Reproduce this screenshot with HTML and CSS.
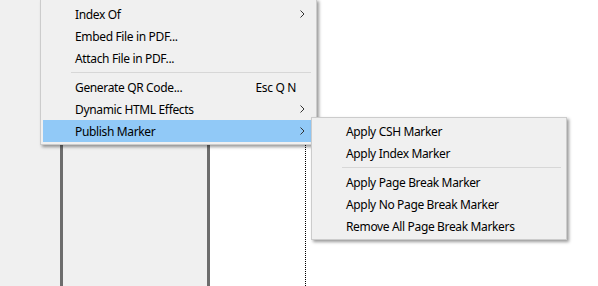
FILE: index.html
```html
<!DOCTYPE html>
<html lang="en">
<head>
    <meta charset="UTF-8">
    <title>Publish Marker menu</title>
    <link rel="stylesheet" href="styles.css">
</head>
<body>
    <div class="workspace">
        <div class="gutter"></div>
        <div class="panel"></div>
        <div class="document">
            <div class="page-edge"></div>
        </div>
    </div>

    <!-- context menu and its open submenu lie over the workspace -->
    <ul class="menu main-menu">
        <li class="item">Index Of<span class="key"></span><span class="arrow"><svg width="5" height="8" viewBox="0 0 5 8"><polyline points="0.5,0.5 4,4 0.5,7.5" /></svg></span></li>
        <li class="item">Embed File in PDF...<span class="key"></span><span class="arrow"></span></li>
        <li class="item">Attach File in PDF...<span class="key"></span><span class="arrow"></span></li>
        <li class="separator"></li>
        <li class="item">Generate QR Code...<span class="key">Esc Q N</span><span class="arrow"></span></li>
        <li class="item">Dynamic HTML Effects<span class="key"></span><span class="arrow"><svg width="5" height="8" viewBox="0 0 5 8"><polyline points="0.5,0.5 4,4 0.5,7.5" /></svg></span></li>
        <li class="item active">Publish Marker<span class="key"></span><span class="arrow"><svg width="5" height="8" viewBox="0 0 5 8"><polyline points="0.5,0.5 4,4 0.5,7.5" /></svg></span></li>
    </ul>

    <ul class="menu sub-menu">
        <li class="item">Apply CSH Marker</li>
        <li class="item">Apply Index Marker</li>
        <li class="separator"></li>
        <li class="item">Apply Page Break Marker</li>
        <li class="item">Apply No Page Break Marker</li>
        <li class="item">Remove All Page Break Markers</li>
    </ul>
</body>
</html>
```

FILE: styles.css
```css
:root {
    --face: #f0f0f0;
    --menu-border: #cccccc;
    --hover: #91c9f7;
    --frame: #6d6d6d;
}

body {
    margin: 0;
    width: 598px;
    height: 286px;
    overflow: hidden;
    position: relative;
    font-family: 'Noto Sans', 'Open Sans', sans-serif;
    font-size: 12px;
    letter-spacing: -0.35px;
    color: #000;
}

.workspace {
    display: flex;
    height: 286px;
}

.gutter {
    width: 60px;
    background-color: var(--face);
}

.panel {
    width: 144px;
    background-color: var(--face);
    border-left: 3px solid var(--frame);
    border-right: 3px solid var(--frame);
}

.document {
    flex: 1;
    background-color: #fff;
    padding-left: 95px;
}

.page-edge {
    height: 100%;
    border-left: 1px dotted #000;
}

.menu {
    position: absolute;
    margin: 0;
    padding: 2px;
    list-style: none;
    background-color: var(--face);
    border: 1px solid var(--menu-border);
    box-shadow: 2px 2px 3px rgba(0,0,0,0.4);
}

.main-menu {
    left: 40px;
    top: -1px;
    width: 271px;
    padding-top: 3px;
}

.sub-menu {
    left: 311px;
    top: 117px;
    width: 250px;
}

.item {
    display: flex;
    align-items: center;
    height: 22px;
    padding-left: 32px;
    white-space: nowrap;
}

.item.active {
    background-color: var(--hover);
}

.key {
    margin-left: auto;
    padding-right: 4px;
}

.arrow {
    width: 14px;
    display: flex;
    align-items: center;
}

.arrow svg {
    display: block;
}

.arrow polyline {
    fill: none;
    stroke: #333;
    stroke-width: 1;
}

.separator {
    height: 1px;
    margin: 3px 3px 3px 28px;
    background-color: #d7d7d7;
}
```
